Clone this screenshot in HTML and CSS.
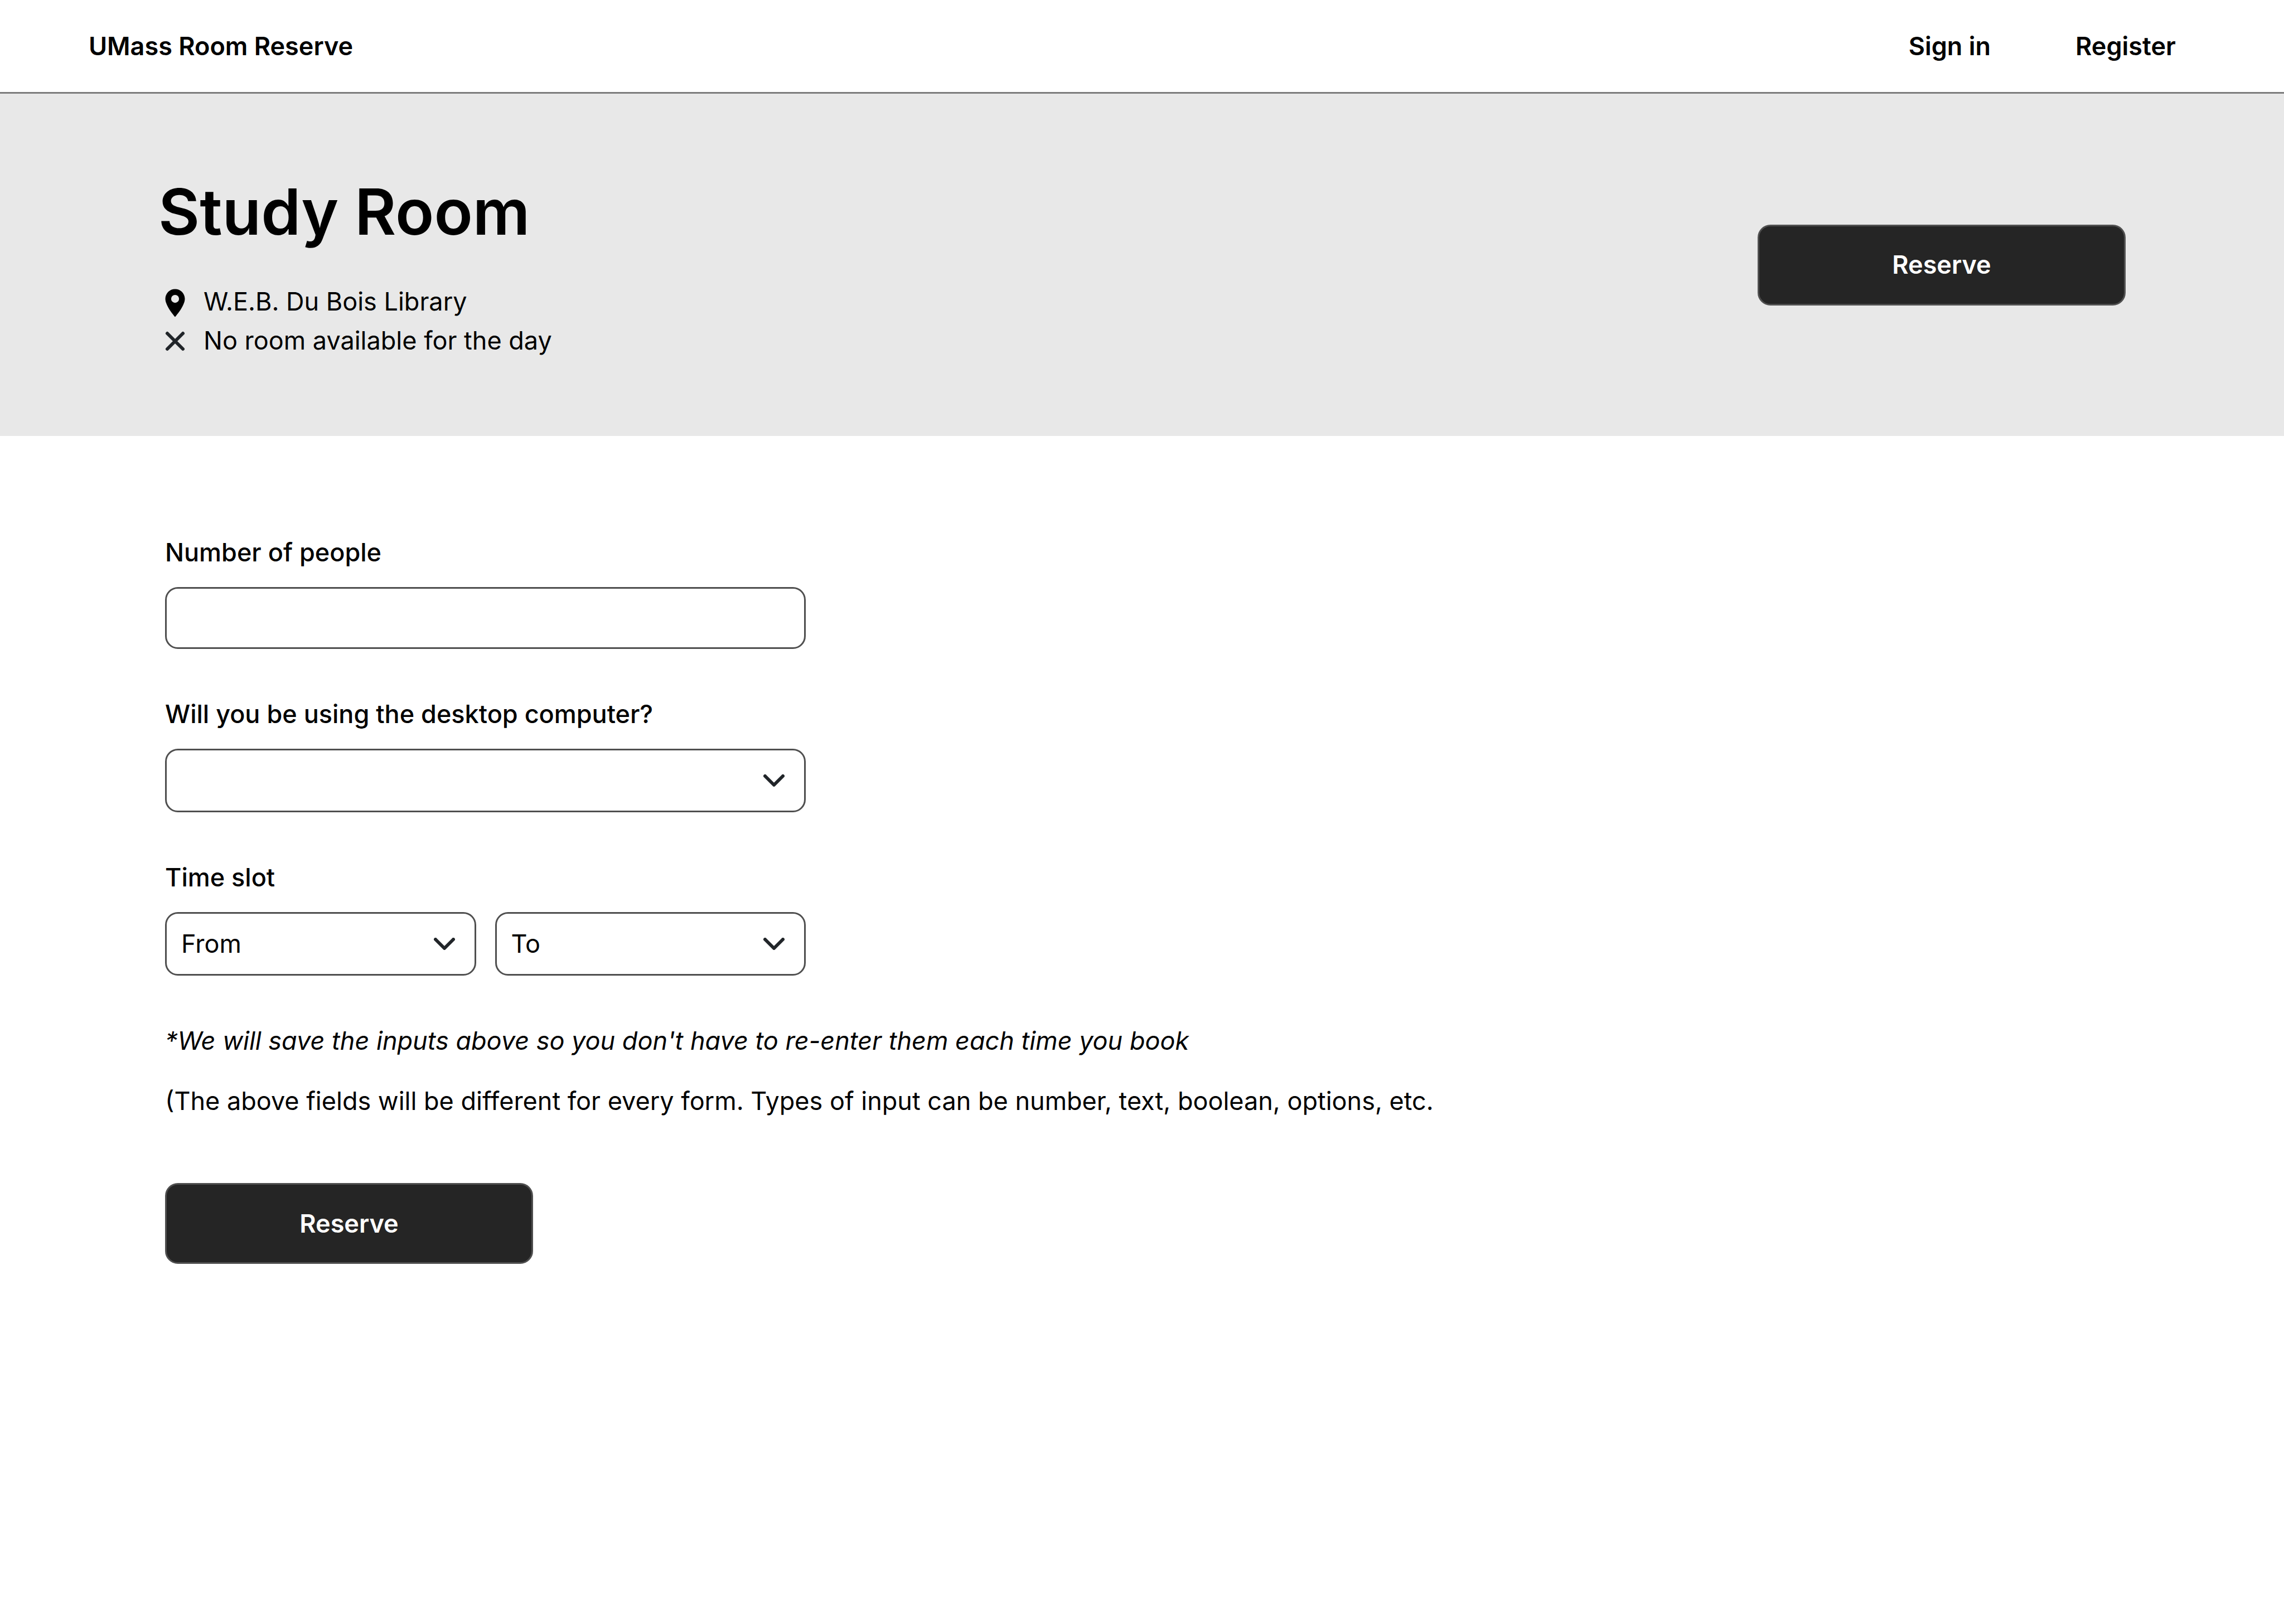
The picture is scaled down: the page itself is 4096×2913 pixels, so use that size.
FILE: index.html
```html
<!DOCTYPE html>
<html lang="en">
<head>
<meta charset="utf-8">
<meta name="viewport" content="width=device-width, initial-scale=1">
<title>UMass Room Reserve</title>
<link rel="stylesheet" href="styles.css">
</head>
<body>
<header class="topbar">
  <a class="topbar-link" href="#">UMass Room Reserve</a>
  <nav class="topbar-nav">
    <a class="topbar-link" href="#">Sign in</a>
    <a class="topbar-link" href="#">Register</a>
  </nav>
</header>

<main>
  <section class="hero">
    <div class="hero-info">
      <h1 class="hero-title">Study Room</h1>
      <ul class="facts">
        <li class="fact">
          <svg class="fact-icon" viewBox="0 0 24 24" aria-hidden="true"><path d="M12 3C8.13 3 5 6.13 5 10c0 5.25 7 13 7 13s7-7.75 7-13c0-3.87-3.13-7-7-7zm0 9.85a2.85 2.85 0 1 1 0-5.7 2.85 2.85 0 0 1 0 5.7z"/></svg>
          W.E.B. Du Bois Library
        </li>
        <li class="fact">
          <svg class="fact-icon" viewBox="0 0 24 24" aria-hidden="true"><path d="M6.4 6.8l11.2 11.2M17.6 6.8L6.4 18" fill="none" stroke="#212529" stroke-width="2.4" stroke-linecap="round"/></svg>
          No room available for the day
        </li>
      </ul>
    </div>
    <button class="button" type="submit" form="reserve-form">Reserve</button>
  </section>

  <form class="form" id="reserve-form">
    <div class="field">
      <label class="label" for="people">Number of people</label>
      <input class="control" id="people" type="text" inputmode="numeric">
    </div>
    <div class="field">
      <label class="label" for="desktop">Will you be using the desktop computer?</label>
      <div class="picker">
        <select class="control control-select" id="desktop"><option></option><option>Yes</option><option>No</option></select>
        <svg class="chevron" viewBox="0 0 38 22" aria-hidden="true"><path d="M3 3l16 16L35 3"/></svg>
      </div>
    </div>
    <div class="field">
      <label class="label" for="from">Time slot</label>
      <div class="slot">
        <div class="picker">
          <select class="control control-select" id="from"><option>From</option></select>
          <svg class="chevron" viewBox="0 0 38 22" aria-hidden="true"><path d="M3 3l16 16L35 3"/></svg>
        </div>
        <div class="picker">
          <select class="control control-select" id="to" aria-label="Time slot end"><option>To</option></select>
          <svg class="chevron" viewBox="0 0 38 22" aria-hidden="true"><path d="M3 3l16 16L35 3"/></svg>
        </div>
      </div>
    </div>
    <div class="notes">
      <p class="note note-saved">*We will save the inputs above so you don't have to re-enter them each time you book</p>
      <p class="note">(The above fields will be different for every form. Types of input can be number, text, boolean, options, etc.</p>
    </div>
    <button class="button" type="submit">Reserve</button>
  </form>
</main>
</body>
</html>
```

FILE: styles.css
```css
* {
  box-sizing: border-box;
}

body {
  margin: 0;
  background: #fff;
  color: #000;
  font-family: Inter, "Liberation Sans", sans-serif;
  font-size: 45px;
  line-height: 56px;
}

.topbar {
  display: flex;
  justify-content: space-between;
  align-items: center;
  padding: 55px 194px 54px 159px;
  border-bottom: 3px solid #7c7c7c;
}

.topbar-nav {
  display: flex;
  gap: 152px;
}

.topbar-link {
  color: inherit;
  font-weight: 600;
  text-decoration: none;
}

.hero {
  display: flex;
  justify-content: space-between;
  align-items: center;
  padding: 0 284px;
  background: #e8e8e8;
}

.hero-info {
  padding: 143px 0 136px;
}

.hero-title {
  margin: 0 0 57px;
  font-size: 114px;
  font-weight: 600;
  line-height: 138px;
}

.facts {
  margin: 0;
  padding: 0;
  list-style: none;
}

.fact {
  display: flex;
  align-items: center;
  gap: 21px;
  line-height: 70px;
}

.fact-icon {
  width: 60px;
  height: 60px;
}

.button {
  width: 660px;
  height: 145px;
  border: 3px solid #4f4f4f;
  border-radius: 23px;
  background: #252525;
  color: #fff;
  font: inherit;
  font-weight: 600;
}

.form {
  padding: 181px 296px;
}

.field {
  max-width: 1149px;
  margin-bottom: 89px;
}

.label {
  display: block;
  margin-bottom: 34px;
  font-weight: 500;
}

.control {
  display: block;
  width: 100%;
  height: 111px;
  padding: 0 26px;
  border: 3px solid #4f4f4f;
  border-radius: 23px;
  background: #fff;
  color: #000;
  font: inherit;
}

.control-select {
  height: 114px;
  appearance: none;
}

.picker {
  display: grid;
  align-items: center;
  flex: 1;
}

.picker > * {
  grid-area: 1 / 1;
}

.chevron {
  justify-self: end;
  width: 38px;
  height: 22px;
  margin-right: 38px;
  fill: none;
  stroke: #212529;
  stroke-width: 6;
  stroke-linecap: round;
  stroke-linejoin: round;
  pointer-events: none;
}

.slot {
  display: flex;
  gap: 34px;
}

.notes {
  display: grid;
  gap: 52px;
  margin-bottom: 119px;
}

.note {
  margin: 0;
}

.note-saved {
  font-style: italic;
}
```
